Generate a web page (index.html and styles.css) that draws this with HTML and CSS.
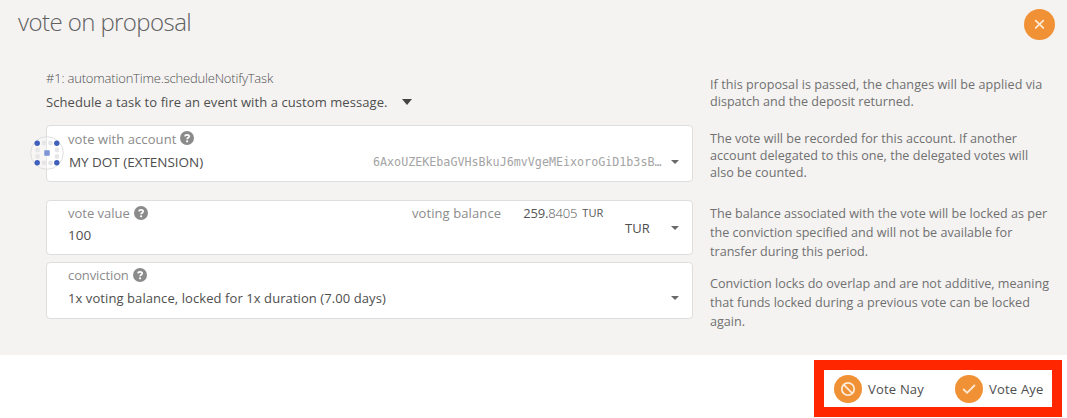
FILE: index.html
```html
<!DOCTYPE html>
<html lang="en">
<head>
<meta charset="utf-8">
<title>Vote on proposal</title>
<link rel="stylesheet" href="styles.css">
</head>
<body>
<svg class="defs" width="0" height="0">
  <symbol id="help" viewBox="0 0 14 14"><circle cx="7" cy="7" r="7" fill="#8b8b8b"/><path d="M4.900 5.300C5.100 3.400 9.200 3.200 9.200 5.400C9.200 6.800 7.100 6.700 7.100 8.200" fill="none" stroke="#fff" stroke-width="1.700"/><circle cx="7.100" cy="10.300" r="1.100" fill="#fff"/></symbol>
</svg>
<main class="modal">
  <header class="header">
    <h1 class="title">vote on proposal</h1>
    <button class="round close" aria-label="Close"><svg width="31" height="31" viewBox="0 0 31 31"><path d="M11.700 11.700l7.600 7.200M19.300 11.700l-7.600 7.200" fill="none" stroke="#fdebd8" stroke-width="1.700" stroke-linecap="round"/></svg></button>
  </header>
  <div class="content">
    <div class="form">
      <div class="call">#1: automationTime.scheduleNotifyTask</div>
      <div class="summary"><span class="summary-text">Schedule a task to fire an event with a custom message.</span><i class="caret big"></i></div>
      <section class="field account">
        <svg class="identicon" width="34" height="34" viewBox="0 0 34 34">
          <circle cx="17" cy="17" r="16.300" fill="#fff" fill-opacity=".25" stroke="#dedede"/>
          <g fill="#e6e6e8"><circle cx="14" cy="7" r="2.400"/><circle cx="20.500" cy="7" r="2.400"/><circle cx="7.500" cy="14" r="2.400"/><circle cx="27" cy="14" r="2.400"/><circle cx="7.500" cy="20.500" r="2.400"/><circle cx="27" cy="20.500" r="2.400"/><circle cx="14" cy="27" r="2.400"/><circle cx="20.500" cy="27" r="2.400"/></g>
          <g fill="#3f5fbc"><circle cx="7.200" cy="7.300" r="2.700"/><circle cx="26.800" cy="7.300" r="2.700"/><circle cx="7.200" cy="26.800" r="2.700"/><circle cx="26.800" cy="26.800" r="2.700"/></g>
          <path d="M14.300 14.300h5.400v5.400h-5.400z" fill="#8ba0dc"/><path d="M16 14v6M18 14v6M14 16h6M14 18h6" stroke="#6c86ce" stroke-width=".5"/>
        </svg>
        <div class="label"><span>vote with account</span><svg class="help"><use href="#help"/></svg></div>
        <div class="value"><span class="name">MY DOT (EXTENSION)</span><span class="address">6AxoUZEKEbaGVHsBkuJ6mvVgeMEixoroGiD1b3sB…</span><i class="caret"></i></div>
      </section>
      <section class="field amount">
        <div class="amount-main">
          <div class="label"><span>vote value</span><svg class="help"><use href="#help"/></svg><span class="balance-label">voting balance</span><span class="balance">259.<span class="fraction">8405</span></span><span class="unit">TUR</span></div>
          <div class="value number">100</div>
        </div>
        <div class="amount-unit"><span>TUR</span><i class="caret"></i></div>
      </section>
      <section class="field conviction">
        <div class="label"><span class="tight">conviction</span><svg class="help"><use href="#help"/></svg></div>
        <div class="value"><span class="lock">1x voting balance, locked for 1x duration (7.00 days)</span><i class="caret"></i></div>
      </section>
    </div>
    <aside class="notes">
      <p class="note n1"><span class="wide">If this proposal is passed, the changes will be applied via</span><span>dispatch and the deposit returned.</span></p>
      <p class="note n2"><span>The vote will be recorded for this account. If another</span><span>account delegated to this one, the delegated votes will</span><span>also be counted.</span></p>
      <p class="note n3"><span>The balance associated with the vote will be locked as per</span><span>the conviction specified and will not be available for</span><span>transfer during this period.</span></p>
      <p class="note n4"><span>Conviction locks do overlap and are not additive, meaning</span><span>that funds locked during a previous vote can be locked</span><span>again.</span></p>
    </aside>
  </div>
</main>
<footer class="footer">
  <div class="actions">
    <button class="action"><span class="round"><svg width="28" height="28" viewBox="0 0 28 28"><g fill="none" stroke="#fdebd8" stroke-width="1.800"><circle cx="14" cy="14" r="6.200"/><path d="M9.600 9.600l8.800 8.800"/></g></svg></span><span class="nay">Vote Nay</span></button>
    <button class="action"><span class="round"><svg width="28" height="28" viewBox="0 0 28 28"><path d="M8.700 14.500l3.400 3.300 7.300-7.300" fill="none" stroke="#fdebd8" stroke-width="1.800" stroke-linecap="round"/></svg></span><span class="aye">Vote Aye</span></button>
  </div>
</footer>
</body>
</html>
```
FILE: styles.css
```css
* { box-sizing: border-box; }
body { margin: 0; width: 1067px; height: 418px; overflow: hidden; background: #fff; color: #4e4e4e; font: 13px/18px "Open Sans", "Noto Sans", sans-serif; }
button { border: 0; padding: 0; background: none; color: inherit; font: inherit; }
.defs { display: block; }
.modal { height: 355px; background: #f4f3f2; white-space: nowrap; }
.header { display: flex; justify-content: space-between; height: 69px; padding: 8px 12px 0 18px; }
.title { margin: -1px 0 0; font-size: 24px; line-height: 29px; font-weight: 300; color: #606060; letter-spacing: -.58px; }
.round { display: flex; flex: none; align-items: center; justify-content: center; width: 28px; height: 28px; border-radius: 50%; background: #f19135; }
.close { width: 31px; height: 31px; margin-top: 1px; }
.content { display: flex; gap: 17px; padding-left: 46px; }
.form { width: 647px; }
.call { height: 18px; font-weight: 300; color: #505050; letter-spacing: -.19px; }
.summary { display: flex; align-items: center; height: 28px; margin-bottom: 10px; padding-top: 2px; }
.summary-text { letter-spacing: .075px; }
.caret { flex: none; width: 0; height: 0; border: 4px solid transparent; border-top-color: #696969; border-bottom: 0; }
.big { margin-left: 14px; border-width: 6px 5px 0; border-top-color: #444; }
.field { position: relative; border: 1px solid #dededf; border-radius: 4px; background: #fff; padding: 0 13px 0 21px; }
.account { height: 57px; margin-bottom: 18px; padding-top: 4px; }
.identicon { position: absolute; left: -17px; top: 10px; }
.label { display: flex; align-items: center; height: 18px; color: #8b8b8b; }
.account .label { letter-spacing: .08px; }
.help { width: 14px; height: 14px; margin: -2px 0 0 4px; }
.value { display: flex; align-items: center; color: #4e4e4e; }
.account .value { height: 28px; padding-left: 1px; }
.account .value .caret, .conviction .caret { margin-left: auto; }
.name { width: 135px; font-size: 13.5px; letter-spacing: -.03px; }
.address { margin-left: 169px; color: #a4a4a4; font: 11.7px/18px "DejaVu Sans Mono", monospace; }
.amount { display: flex; height: 55px; margin-bottom: 7px; }
.amount-main { width: 541px; padding-top: 3px; }
.amount-main .value { height: 25px; }
.number { font-size: 13.5px; }
.amount-main .help { margin-top: 0; }
.balance-label { margin-left: 264px; letter-spacing: .1px; }
.balance { margin-left: 22px; color: #555; letter-spacing: -.15px; }
.fraction { font-weight: 300; }
.unit { margin-left: 5px; font-size: 11px; color: #555; }
.amount-unit { display: flex; flex: 1; align-items: center; justify-content: space-between; padding-left: 16px; }
.conviction { height: 57px; padding-top: 3px; }
.conviction .help { margin-top: 0; }
.conviction .value { height: 28px; }
.tight { letter-spacing: -.1px; }
.lock { letter-spacing: .08px; }
.notes { width: 350px; color: #707070; font-size: 12.6px; }
.note { display: flex; flex-direction: column; align-items: flex-start; margin: 0; line-height: 17px; }
.wide { letter-spacing: .05px; }
.n1 { padding-top: 7px; height: 61px; }
.n2 { height: 74px; }
.n3, .n4 { line-height: 19px; }
.n3 { height: 70px; }
.footer { display: flex; justify-content: flex-end; height: 63px; padding: 5px 5px 0 0; }
.actions { display: flex; align-items: center; width: 248px; height: 57px; border: 10px solid #ff2600; padding-left: 10px; gap: 31px; white-space: nowrap; }
.action { display: flex; align-items: center; gap: 6px; }
.nay { letter-spacing: .2px; }
.aye { letter-spacing: .2px; }
```
